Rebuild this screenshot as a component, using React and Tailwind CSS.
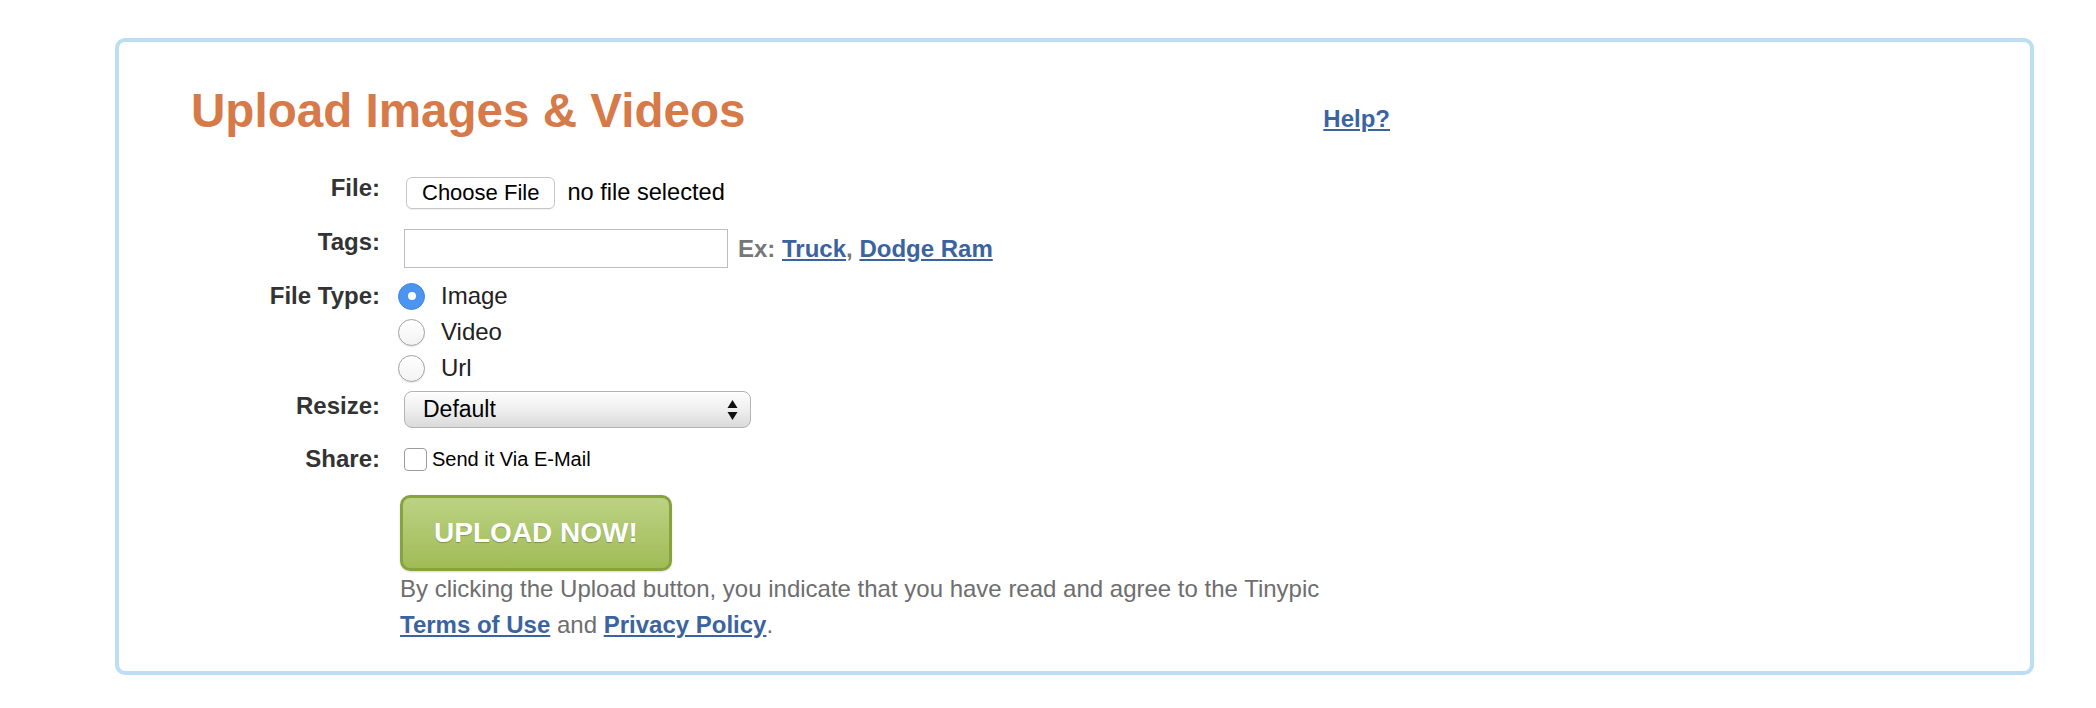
import React from 'react';

const labelCls = 'w-[189px] shrink-0 text-right text-[24px] font-bold leading-[26px] text-[#333]';

function Row({ label, labelClass = '', className = '', children }) {
  return (
    <div className={`flex items-start ${className}`}>
      <div className={`${labelCls} ${labelClass}`}>{label}</div>
      <div className="ml-[20px] flex flex-col">{children}</div>
    </div>
  );
}

function Radio({ checked, label }) {
  return (
    <div className="flex h-[36px] items-center">
      {checked ? (
        <span className="ml-[-2px] flex h-[27px] w-[27px] items-center justify-center rounded-full border border-[#3f86e6] bg-[#4b94f1]">
          <span className="h-[8px] w-[8px] rounded-full bg-white" />
        </span>
      ) : (
        <span className="ml-[-2px] h-[27px] w-[27px] rounded-full border border-[#a2a2a2] bg-linear-to-b from-white to-[#f3f3f3] shadow-[0_1px_1px_rgba(0,0,0,0.1)]" />
      )}
      <span className="ml-[16px] text-[24px] leading-[36px] text-[#222]">{label}</span>
    </div>
  );
}

export default function App() {
  return (
    <div className="min-h-screen bg-white pl-[115px] pt-[38px] font-['Liberation_Sans',Arial,sans-serif]">
      <div className="h-[637px] w-[1919px] rounded-[10px] border-4 border-[#bcdef3] pl-[72px] pt-[41px]">
        <div className="flex w-[1199px] items-baseline justify-between">
          <h1 className="text-[47.6px] font-bold leading-[56px] text-[#d77a49]">Upload Images &amp; Videos</h1>
          <a href="#" className="text-[24px] font-bold text-[#3a64a0] underline">Help?</a>
        </div>

        <form className="mt-[36px]" onSubmit={(e) => e.preventDefault()}>
          <Row label="File:">
            <div className="flex items-center">
              <span className="ml-[6px] flex h-[32px] items-center rounded-[6px] border border-[#c6c6c6] bg-white px-[15px] text-[22px] text-black shadow-[0_1px_1px_rgba(0,0,0,0.06)]">
                Choose File
              </span>
              <span className="ml-[12px] text-[23.6px] text-black">no file selected</span>
            </div>
          </Row>

          <Row label="Tags:" className="mt-[19px]">
            <div className="flex items-center">
              <input type="text" className="ml-[4px] h-[39px] w-[324px] border border-[#bdbdbd] bg-white outline-none" />
              <span className="ml-[10px] text-[24px] font-bold leading-[26px] text-[#777]">
                Ex: <a href="#" className="text-[#3b63a0] underline">Truck</a>,{' '}
                <a href="#" className="text-[#3b63a0] underline">Dodge Ram</a>
              </span>
            </div>
          </Row>

          <Row label="File Type:" labelClass="leading-[36px]" className="mt-[10px]">
            <Radio checked label="Image" />
            <Radio label="Video" />
            <Radio label="Url" />
          </Row>

          <Row label="Resize:" labelClass="pt-[2px]" className="mt-[5px]">
            <div className="ml-[4px] flex h-[37px] w-[347px] items-center justify-between rounded-[8px] border border-[#b3b3b3] bg-linear-to-b from-[#fdfdfd] via-[#efefef] to-[#dadada] pl-[18px] pr-[12px] shadow-[inset_0_1px_0_rgba(255,255,255,0.9)]">
              <span className="text-[23px] leading-none text-black">Default</span>
              <svg width="11" height="22" viewBox="0 0 11 22">
                <polygon points="5.5,1 10.5,9 0.5,9" fill="#111" />
                <polygon points="0.5,13 10.5,13 5.5,21" fill="#111" />
              </svg>
            </div>
          </Row>

          <Row label="Share:" className="mt-[18px]">
            <div className="flex items-start">
              <span className="ml-[4px] mt-[2px] h-[23px] w-[23px] rounded-[4px] border border-[#9c9c9c] bg-white" />
              <span className="ml-[5px] text-[20px] leading-[26px] text-black">Send it Via E-Mail</span>
            </div>
          </Row>

          <div className="pl-[209px]">
            <button
              type="submit"
              className="mt-[23px] flex h-[76px] w-[272px] items-center justify-center rounded-[10px] border-[3px] border-[#87a33f] bg-linear-to-b from-[#bcd283] to-[#a0bc55] text-[28px] font-bold text-white shadow-[0_1px_2px_rgba(0,0,0,0.15)] [text-shadow:0_1px_1px_rgba(0,0,0,0.25)]"
            >
              UPLOAD NOW!
            </button>
            <p className="text-[24px] leading-[36px] text-[#6e6e6e]">
              By clicking the Upload button, you indicate that you have read and agree to the Tinypic
              <br />
              <a href="#" className="font-bold text-[#3b63a0] underline">Terms of Use</a> and{' '}
              <a href="#" className="font-bold text-[#3b63a0] underline">Privacy Policy</a>.
            </p>
          </div>
        </form>
      </div>
    </div>
  );
}
